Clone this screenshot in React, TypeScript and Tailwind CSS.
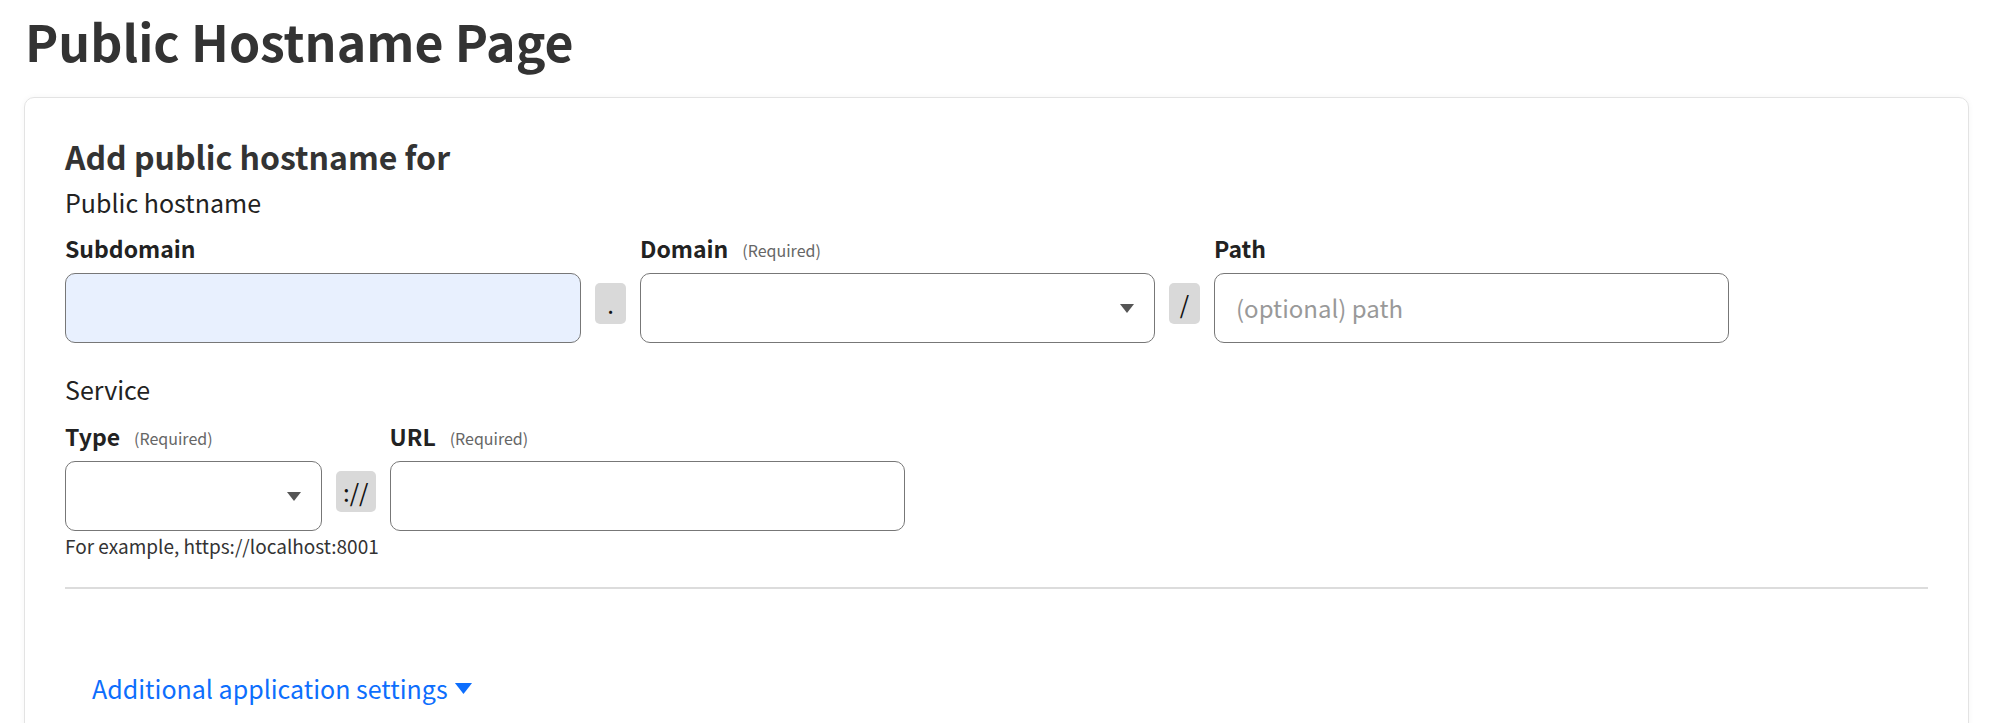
import React from 'react';

const font = { fontFamily: '"Noto Sans CJK KR", "Noto Sans", sans-serif' };

function Caret({ className = '' }: { className?: string }) {
  return (
    <svg width="14" height="9" viewBox="0 0 14 9" className={className}>
      <path d="M0 0 L14 0 L7 9 Z" fill="currentColor" />
    </svg>
  );
}

function Label({ text, required }: { text: string; required?: boolean }) {
  return (
    <div className="h-[30px] mb-[10px] flex items-end leading-[30px]">
      <span className="text-[23px] font-bold text-[#222]">{text}</span>
      {required && <span className="ml-[14px] text-[16px] text-[#666] leading-[26px]">(Required)</span>}
    </div>
  );
}

function Sep({ text }: { text: string }) {
  return (
    <div className="mx-[14px] mb-[19px] min-w-[31px] px-[7px] h-[41px] rounded-[5px] bg-[#d9d9d9] flex items-center justify-center text-[24px] text-[#111] leading-none">
      {text}
    </div>
  );
}

function SelectBox({ w }: { w: string }) {
  return (
    <div className={`${w} h-[70px] rounded-[10px] border border-[#777] bg-white flex items-center justify-end pr-[20px] text-[#555]`}>
      <Caret />
    </div>
  );
}

export default function App() {
  return (
    <div className="min-h-screen bg-white text-[#333] px-[24px] pt-[8px] overflow-hidden" style={font}>
      <h1 className="text-[50px] font-bold leading-[64px] text-[#333] ml-[1px]">Public Hostname Page</h1>

      <div className="mt-[25px] rounded-[10px] border border-[#e3e3e3] shadow-[0_0_6px_rgba(0,0,0,0.04)] px-[40px] pt-[36px] pb-[120px] w-[1945px]">
        <h4 className="text-[32px] font-bold leading-[44px] text-[#333]">Add public hostname for</h4>
        <div className="text-[25px] leading-[32px] mt-[8px] text-[#222]">Public hostname</div>

        <div className="flex items-end mt-[15px]">
          <div className="flex flex-col">
            <Label text="Subdomain" />
            <div className="w-[516px] h-[70px] rounded-[10px] border border-[#777] bg-[#e8f0fe]" />
          </div>
          <Sep text="." />
          <div className="flex flex-col">
            <Label text="Domain" required />
            <SelectBox w="w-[515px]" />
          </div>
          <Sep text="/" />
          <div className="flex flex-col">
            <Label text="Path" />
            <div className="w-[515px] h-[70px] rounded-[10px] border border-[#777] bg-white flex items-center px-[21px] text-[24px] text-[#999]">
              (optional) path
            </div>
          </div>
        </div>

        <div className="text-[25px] leading-[32px] mt-[30px] text-[#222]">Service</div>
        <div className="flex items-end mt-[16px]">
          <div className="flex flex-col">
            <Label text="Type" required />
            <SelectBox w="w-[257px]" />
          </div>
          <Sep text="://" />
          <div className="flex flex-col">
            <Label text="URL" required />
            <div className="w-[515px] h-[70px] rounded-[10px] border border-[#777] bg-white" />
          </div>
        </div>
        <div className="text-[19px] leading-[26px] mt-[2px] text-[#333]">For example, https://localhost:8001</div>

        <hr className="mt-[28px] border-0 h-[2px] bg-[#dcdcdc]" />

        <div className="mt-[81px] ml-[27px] flex items-center text-[#0d6efd]">
          <span className="text-[25px] leading-[36px]">Additional application settings</span>
          <Caret className="ml-[6px] w-[19px] h-[11px]" />
        </div>
      </div>
    </div>
  );
}
